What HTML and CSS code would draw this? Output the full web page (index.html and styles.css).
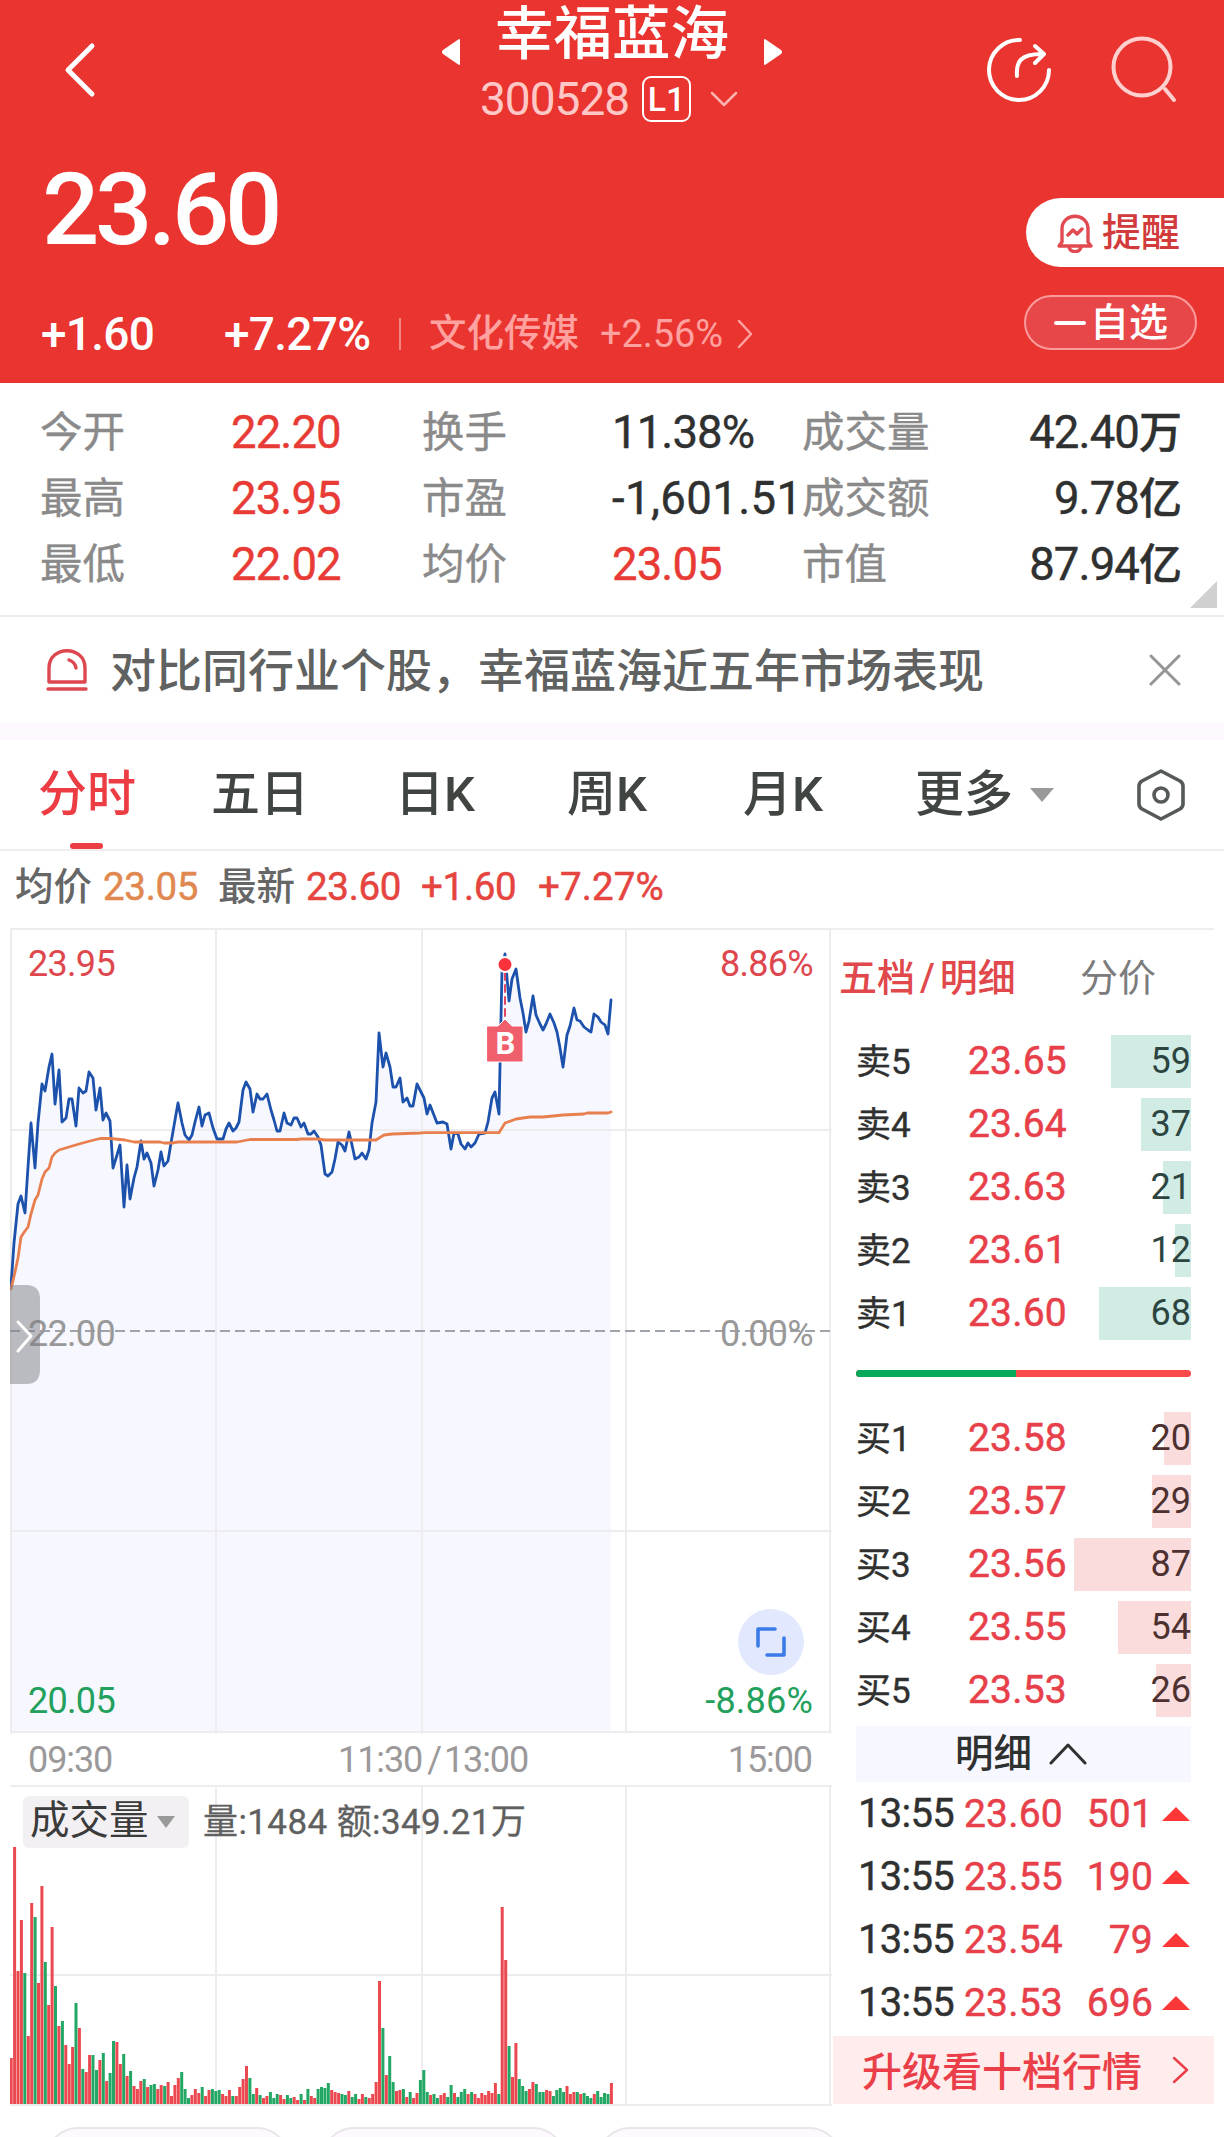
FILE: index.html
```html
<!DOCTYPE html>
<html lang="zh-CN">
<head>
  <meta charset="UTF-8">
  <title>幸福蓝海 300528</title>
  <meta name="viewport" content="width=device-width, initial-scale=1.0">
  <link rel="stylesheet" href="styles.css">
</head>
<body>
  <header class="header">
    <div class="topbar">
      <svg class="back" width="36" height="60" viewBox="0 0 36 60"><path d="M30 6 L6 30 L30 54"/></svg>
      <div class="title">
        <div class="title-row">
          <svg class="tri" width="20" height="28" viewBox="0 0 20 28"><path d="M18 1 L2 12 Q0 14 2 16 L18 27 Q19 27 19 26 V2 Q19 1 18 1Z"/></svg>
          <h1>幸福蓝海</h1>
          <svg class="tri" width="20" height="28" viewBox="0 0 20 28"><path d="M2 1 L18 12 Q20 14 18 16 L2 27 Q1 27 1 26 V2 Q1 1 2 1Z"/></svg>
        </div>
        <div class="code-row">
          <span class="code">300528</span>
          <span class="level">L1</span>
          <svg width="28" height="18" viewBox="0 0 28 18"><path d="M2 3 L14 15 L26 3"/></svg>
        </div>
      </div>
      <div class="actions">
        <svg width="70" height="70" viewBox="0 0 70 70" class="share"><path d="M36 6 A30 30 0 1 0 65 36"/><path d="M33 42 C32 28 36 20 58 20 M51 12 L60 20 L51 29"/></svg>
        <svg width="72" height="72" viewBox="0 0 72 72" class="search"><circle cx="34" cy="33" r="28.5"/><path d="M57 55 L66 66"/></svg>
      </div>
    </div>
    <div class="quote">
      <div class="quote-main">
        <div class="price">23.60</div>
        <div class="change">
          <span class="diff">+1.60</span>
          <span class="diff">+7.27%</span>
          <i class="bar"></i>
          <span class="sector">文化传媒</span>
          <span class="sector-pct">+2.56%</span>
          <svg width="18" height="30" viewBox="0 0 18 30"><path d="M3 2 L15 15 L3 28"/></svg>
        </div>
      </div>
      <div class="quote-side">
        <div class="remind">
          <svg width="38" height="40" viewBox="0 0 38 40"><path d="M6 29 V16 C6 -1 32 -1 32 16 V29 L35 33 H3 Z M13 34 C14 40 24 40 25 34 M12 22 L17 17 L21 21 L26 16"/></svg>
          <span>提醒</span>
        </div>
        <div class="favorite"><i></i><span>自选</span></div>
      </div>
    </div>
  </header>

  <section class="stats">
    <span>今开</span><b class="red">22.20</b><span>换手</span><b>11.38%</b><span>成交量</span><b class="end">42.40<em>万</em></b>
    <span>最高</span><b class="red">23.95</b><span>市盈</span><b class="wide">-1,601.51</b><span>成交额</span><b class="end">9.78<em>亿</em></b>
    <span>最低</span><b class="red">22.02</b><span>均价</span><b class="red">23.05</b><span>市值</span><b class="end">87.94<em>亿</em></b>
    <i class="corner"></i>
  </section>

  <section class="notice">
    <svg class="siren" width="42" height="44" viewBox="0 0 42 44"><path d="M3 34 V20 C3 -3 39 -3 39 20 V34 Z M2 41 H40 M23 12 Q29 14 30 20"/></svg>
    <p>对比同行业个股，幸福蓝海近五年市场表现</p>
    <svg class="close" width="32" height="32" viewBox="0 0 32 32"><path d="M2 2 L30 30 M30 2 L2 30"/></svg>
  </section>

  <nav class="tabs">
    <a class="active">分时</a>
    <a>五日</a>
    <a>日K</a>
    <a>周K</a>
    <a>月K</a>
    <a>更多</a>
    <i class="down"></i>
    <svg width="54" height="56" viewBox="0 0 54 56"><path d="M27 4 L46 14 Q49 16 49 19 V37 Q49 40 46 42 L27 52 L8 42 Q5 40 5 37 V19 Q5 16 8 14 Z"/><circle cx="27" cy="28" r="7"/></svg>
  </nav>

  <div class="summary">
    <span>均价</span><b class="orange">23.05</b><span>最新</span><b>23.60</b><b>+1.60</b><b>+7.27%</b>
  </div>

  <main class="board">
    <div class="charts">
      <svg class="trend" width="822" height="806" viewBox="0 0 822 806">
        <polygon id="area"/>
        <path class="grid" d="M1 0 V805 M206 0 V805 M412 0 V805 M616 0 V805 M820 0 V805 M0 1 H821 M0 202 H821 M0 603 H821 M0 804 H821"/>
        <path class="zero" d="M0 403 H821"/>
        <polyline id="price" points="1,358 4,315 8,276 11,268 15,285 18,239 21,195 25,240 28,195 32,156 35,163 39,139 42,126 45,176 49,142 52,194 56,190 59,171 62,171 66,198 69,160 73,165 76,163 79,144 83,150 86,182 90,160 93,192 96,185 100,193 103,240 107,227 110,217 114,279 117,237 120,271 124,250 127,239 131,213 134,231 137,225 141,235 144,258 148,242 151,224 154,238 158,233 161,215 165,192 168,175 172,195 175,207 179,212 182,207 185,194 189,179 192,198 195,187 199,185 203,200 207,211 213,211 216,201 219,195 223,203 226,200 229,194 233,162 236,154 240,161 243,184 247,166 250,171 253,171 257,166 261,182 264,192 267,203 270,203 274,185 277,195 281,197 284,190 287,190 291,199 294,195 298,206 301,206 304,203 308,209 311,217 315,246 318,248 322,244 325,231 328,214 332,217 335,223 339,204 342,217 345,231 349,229 352,225 356,231 359,222 362,195 366,174 369,105 373,139 376,125 380,139 383,159 386,159 390,150 393,174 397,170 400,178 403,178 407,156 414,170 417,186 420,177 427,195 433,194 437,196 441,221 444,205 448,206 451,216 455,221 458,215 461,219 465,215 469,206 475,205 478,194 482,170 485,164 489,186 492,42 495,26 499,73 502,51 506,41 510,70 513,85 516,104 519,93 523,68 526,87 530,96 533,102 536,96 540,86 544,95 547,104 550,120 553,139 557,107 560,98 564,80 567,92 570,93 574,99 578,102 581,104 584,86 588,89 591,94 595,97 598,106 601,72"/>
        <polyline id="average" points="1,361 5,344 8,330 11,309 15,303 18,299 21,286 25,272 28,267 32,251 35,244 39,240 42,229 45,225 49,222 59,219 69,216 80,213 90,210.5 100,210.5 115,212 124,214 150,214 154,215 162,215 168,214 227,214 240,211.5 287,211.5 291,211 307,211 315,212 366,212 374,207 382,206 410,205 415,204.7 489,204.7 495,195 506,191 520,189 533,189 553,187 574,186 577,185 598,185 601,184"/>
        <path class="mark-line" d="M495 45 V92"/>
        <circle class="mark-dot" cx="495" cy="36.5" r="7.5"/>
        <path class="mark" d="M477 98 H488 L495 91 L502 98 H513 V134 H477 Z"/>
        <text class="mark-text" x="495" y="126">B</text>
        <text class="up" x="18" y="48">23.95</text>
        <text class="up right" x="803" y="48">8.86%</text>
        <text x="18" y="418">22.00</text>
        <text class="right" x="803" y="418">0.00%</text>
        <text class="fall" x="18" y="785">20.05</text>
        <text class="fall right wide" x="803" y="785">-8.86%</text>
        <path class="handle" d="M0 357 H16 Q30 357 30 371 V442 Q30 456 16 456 H0 Z"/>
        <path class="handle-arrow" d="M8 394 L21 408 L8 423"/>
        <circle class="expand" cx="761" cy="714" r="33"/>
        <path class="expand-icon" d="M748 718 V701 H765 M774 710 V727 H757"/>
      </svg>
      <div class="times"><span>09:30</span><span>11:30<em>/</em>13:00</span><span>15:00</span></div>
      <div class="volume">
        <svg width="822" height="321" viewBox="0 0 822 321">
          <path class="grid" d="M206 0 V320 M412 0 V320 M616 0 V320 M820 0 V320 M0 1 H821 M0 190 H821 M0 320 H821"/>
          <g id="bars"></g>
        </svg>
        <div class="volume-head">
          <span class="picker"><span>成交量</span><i class="down"></i></span>
          <span class="volume-text">量:1484 额:349.21万</span>
        </div>
      </div>
    </div>

    <aside class="depth">
      <div class="depth-tabs"><span class="active">五档<em>/</em>明细</span><span>分价</span></div>
      <div class="orders" id="sell"></div>
      <div class="ratio"><i></i></div>
      <div class="orders" id="buy"></div>
      <div class="detail-title"><span>明细</span><svg width="38" height="24" viewBox="0 0 38 24"><path d="M2 21 L19 3 L36 21"/></svg></div>
      <div class="trades" id="trades"></div>
      <div class="upgrade"><span>升级看十档行情</span><svg width="18" height="30" viewBox="0 0 18 30"><path d="M2 3 L15 15 L2 27"/></svg></div>
    </aside>
  </main>

  <div class="chips"><i></i><i></i><i></i></div>

  <script>
    const sell = [["卖5", "23.65", 59], ["卖4", "23.64", 37], ["卖3", "23.63", 21], ["卖2", "23.61", 12], ["卖1", "23.60", 68]];
    const buy = [["买1", "23.58", 20], ["买2", "23.57", 29], ["买3", "23.56", 87], ["买4", "23.55", 54], ["买5", "23.53", 26]];
    const trades = [["23.60", 501], ["23.55", 190], ["23.54", 79], ["23.53", 696]];

    // one bar per minute, negative = falling minute
    const volumes = [
      46, 257, 133, 184, -131, 68, 201, -187, 121, 218, -142, 99, 177, -118, 78, -83, 59, 40, 57, -101,
      76, -35, 32, 49, -49, -34, 44, -51, 23, -31, -63, 62, 40, -50, 28, -33, 18, 15, 23, -25,
      17, -19, -20, 15, 19, -18, 22, 8, 19, 26, -32, -15, -6, 9, 15, 11, -17, 8, 14, -15,
      -13, -14, 10, 8, 14, -8, 8, 17, 25, 38, -26, -10, 16, -9, 6, 8, -12, -6, -10, 9,
      5, -9, -6, 7, 4, -10, 4, -15, 8, 6, -15, -17, -16, -21, 14, 12, 11, -10, -9, 13,
      -7, -10, 5, 10, -7, 6, 10, 22, 123, -76, 29, -48, -22, 13, 14, -15, 7, -12, 6, 11,
      -24, -34, -12, 9, -10, -6, 9, 11, -7, -19, 11, -7, -12, -15, 10, -12, 10, 6, 11, 9,
      13, 11, 21, -10, 197, 144, -58, 27, 61, -25, -18, -13, 15, 22, -20, -12, -12, 14, 13, -8,
      -14, -16, -12, 18, 10, 12, -12, 10, -11, -8, -6, 10, -13, -7, -11, -10, 21
    ];

    function showOrders(id, rows) {
      document.getElementById(id).innerHTML = rows.map(([name, price, count]) =>
        `<div class="order"><span class="name">${name}</span><span class="cost">${price}</span>` +
        `<span class="count"><i style="width: ${Math.round(count * 1.35)}px"></i><b>${count}</b></span></div>`
      ).join("");
    }

    function showVolumes() {
      document.getElementById("bars").innerHTML = volumes.map((v, i) => {
        const h = Math.abs(v);
        return `<rect class="${v > 0 ? "rise" : "drop"}" x="${(i * 3.41 - 0.3).toFixed(1)}" y="${319 - h}" width="3" height="${h}"/>`;
      }).join("");
    }

    showOrders("sell", sell);
    showOrders("buy", buy);
    showVolumes();

    document.getElementById("trades").innerHTML = trades.map(([price, count]) =>
      `<div class="trade"><span>13:55</span><span class="cost">${price}</span><span class="cost num">${count}</span><i></i></div>`
    ).join("");

    document.getElementById("area").setAttribute("points",
      "1,804 " + document.getElementById("price").getAttribute("points") + " 601,804");
  </script>
</body>
</html>
```

FILE: styles.css
```css
* {
  box-sizing: border-box;
}

body {
  margin: 0;
  width: 1224px;
  height: 2137px;
  overflow: hidden;
  background: #fff;
  color: #2f3030;
  font-family: Roboto, "Noto Sans CJK SC", sans-serif;
}

svg {
  display: block;
  flex: none;
  fill: none;
  stroke-linecap: round;
  stroke-linejoin: round;
}

em, i {
  font-style: normal;
}

b {
  font-weight: 500;
}

.header {
  height: 383px;
  background: #e93430;
  color: #fff;
}

.topbar {
  display: grid;
  grid-template-columns: 441px 342px 1fr;
  height: 130px;
}

.back {
  margin: 40px 0 0 62px;
  stroke: #fff;
  stroke-width: 5;
}

.title-row {
  display: flex;
  justify-content: space-between;
  height: 66px;
}

.title-row h1 {
  margin: 0;
  font-size: 58.5px;
  font-weight: 500;
  line-height: 69px;
}

.tri {
  margin-top: 38px;
  fill: #fff;
}

.code-row {
  display: flex;
  align-items: center;
  height: 46px;
  margin-top: 10px;
  padding-left: 39px;
}

.code {
  width: 162px;
  color: #ffc8c6;
  font-size: 46px;
  letter-spacing: -1px;
}

.level {
  width: 49px;
  height: 46px;
  margin-right: 19px;
  border: 2px solid #fff;
  border-radius: 9px;
  font-size: 34px;
  font-weight: 500;
  line-height: 42px;
  text-align: center;
}

.code-row svg {
  stroke: #ffb3b0;
  stroke-width: 2.5;
}

.actions {
  display: flex;
  padding: 34px 0 0 201px;
  gap: 54px;
}

.share {
  stroke: #fff;
  stroke-width: 4;
}

.search {
  stroke: #ffd0ce;
  stroke-width: 4;
}

.quote {
  display: flex;
  justify-content: space-between;
}

.price {
  height: 104px;
  margin: 28px 0 0 42px;
  font-size: 101px;
  font-weight: 500;
  line-height: 103px;
  letter-spacing: -4.3px;
}

.change {
  display: grid;
  grid-template-columns: 183px 175px 30px 171px 136px auto;
  align-items: center;
  height: 50px;
  margin-top: 47px;
  padding-left: 41px;
}

.diff {
  font-size: 46px;
  font-weight: 500;
  line-height: 46px;
  letter-spacing: -0.7px;
}

.bar {
  width: 2px;
  height: 32px;
  background: #f08583;
}

.sector {
  color: #ffa19f;
  font-size: 37.5px;
  font-weight: 500;
  line-height: 46px;
  padding-bottom: 2px;
}

.sector-pct {
  color: #ffa19f;
  font-size: 38px;
  line-height: 46px;
  letter-spacing: -0.1px;
}

.change svg {
  stroke: #ffa19f;
  stroke-width: 2.5;
}

.quote-side {
  width: 200px;
  padding-top: 68px;
}

.remind {
  display: flex;
  align-items: center;
  height: 69px;
  margin-left: 2px;
  padding-left: 30px;
  gap: 8px;
  border-radius: 35px 0 0 35px;
  background: #fff;
  color: #d23b3b;
  font-size: 39px;
  font-weight: 500;
}

.remind span {
  line-height: 60px;
}

.remind svg {
  stroke: #e04a50;
  stroke-width: 3.4;
}

.favorite {
  display: flex;
  align-items: center;
  width: 173px;
  height: 55px;
  margin-top: 28px;
  padding-left: 28px;
  gap: 4px;
  border: 2px solid #fb9b9b;
  border-radius: 28px;
  background: #e8474a;
  font-size: 39px;
  font-weight: 500;
}

.favorite i {
  width: 32px;
  height: 4px;
  border-radius: 2px;
  background: #fff;
}

.favorite span {
  line-height: 50px;
}

.stats {
  display: grid;
  position: relative;
  grid-template-columns: 191px 191px 190px 190px 126px 254px;
  grid-auto-rows: 66px;
  align-items: center;
  height: 234px;
  padding: 17px 0 0 40px;
  border-bottom: 2px solid #ececec;
}

.stats span {
  color: #8b8a8b;
  font-size: 42.5px;
  line-height: 60px;
  white-space: nowrap;
  -webkit-text-stroke: 0.4px;
}

.stats b {
  font-size: 45.5px;
  font-weight: 400;
  line-height: 60px;
  letter-spacing: -0.9px;
  white-space: nowrap;
  -webkit-text-stroke: 0.4px;
}

.stats .wide {
  letter-spacing: 0.4px;
}

.stats em {
  font-size: 43px;
  font-weight: 500;
  letter-spacing: 0;
}

.stats .end {
  text-align: right;
}

.stats .red {
  color: #e83b35;
}

.corner {
  position: absolute;
  right: 7px;
  bottom: 7px;
  border-bottom: 27px solid #d0d0d0;
  border-left: 27px solid transparent;
}

.notice {
  display: flex;
  align-items: center;
  height: 123px;
  padding: 0 43px 0 46px;
  border-bottom: 17px solid #fcf8fd;
}

.notice p {
  flex: 1;
  margin: 0 0 0 22px;
  padding-bottom: 6px;
  color: #5f6260;
  font-size: 46px;
  font-weight: 500;
}

.siren {
  stroke: #dd4850;
  stroke-width: 3.4;
}

.close {
  stroke: #969495;
  stroke-width: 3;
}

.tabs {
  display: grid;
  grid-template-columns: 173px 184px 172px 176px 172px 115px 104px auto;
  align-items: center;
  height: 111px;
  padding: 0 0 2px 38px;
  border-bottom: 2px solid #eee;
  color: #414541;
  font-size: 49px;
  font-weight: 500;
}

.tabs a {
  line-height: 109px;
}

.tabs .active {
  position: relative;
  color: #ec3d45;
}

.tabs .active::after {
  content: "";
  position: absolute;
  left: 32px;
  bottom: 0;
  width: 33px;
  height: 6px;
  border-radius: 3px;
  background: #ec3d45;
}

.tabs svg {
  stroke: #555957;
  stroke-width: 3.6;
}

.down {
  width: 0;
  border-top: 14px solid #999;
  border-right: 12px solid transparent;
  border-left: 12px solid transparent;
}

.summary {
  display: grid;
  grid-template-columns: 88px 115px 88px 115px 117px auto;
  align-items: center;
  height: 70px;
  padding-left: 15px;
  color: #666;
  font-size: 38.5px;
}

.summary span {
  padding-bottom: 6px;
  font-weight: 500;
}

.summary b {
  color: #e5443f;
  font-size: 38.5px;
  font-weight: 400;
  letter-spacing: -0.3px;
  -webkit-text-stroke: 0.5px;
}

.summary b:last-child {
  letter-spacing: 0.1px;
}

.summary .orange {
  color: #e08850;
}

.board {
  display: flex;
  height: 1178px;
  margin: 7px 10px 0;
}

.charts {
  width: 822px;
}

.grid {
  stroke: #ededf0;
  stroke-width: 2;
}

.zero {
  stroke: #9fa3ab;
  stroke-width: 2;
  stroke-dasharray: 10 5;
  stroke-linecap: butt;
}

#area {
  fill: #f6f7ff;
}

#price {
  stroke: #1c51ac;
  stroke-width: 2.8;
}

#average {
  stroke: #e87f4f;
  stroke-width: 2.8;
}

.trend text {
  fill: #999;
  font-size: 36px;
  letter-spacing: -0.7px;
}

.trend .right {
  text-anchor: end;
}

.trend .wide {
  letter-spacing: 0.2px;
}

.trend .up {
  fill: #de474d;
}

.trend .fall {
  fill: #22a05c;
}

.mark-line {
  stroke: #e04562;
  stroke-width: 2;
  stroke-dasharray: 7 5;
}

.mark-dot {
  fill: #fb323b;
  stroke: #fff;
  stroke-width: 2;
}

.mark {
  fill: #f0606c;
  stroke: #fff;
  stroke-width: 1;
}

.trend .mark-text {
  fill: #fff;
  font-size: 31px;
  font-weight: 700;
  text-anchor: middle;
}

.handle {
  fill: rgba(125, 125, 132, 0.5);
}

.handle-arrow {
  stroke: #fff;
  stroke-width: 3;
}

.expand {
  fill: #e2e8fd;
}

.expand-icon {
  stroke: #3b7be8;
  stroke-width: 3.6;
}

.times {
  display: grid;
  grid-template-columns: 310px 1fr auto;
  align-items: center;
  height: 51px;
  padding: 0 20px 0 18px;
  color: #9b999a;
  font-size: 36px;
  letter-spacing: -1.1px;
}

.times em {
  margin: 0 3px 0 5px;
}

.volume {
  position: relative;
}

.rise {
  fill: #ec4850;
}

.drop {
  fill: #22a764;
}

.volume-head {
  position: absolute;
  top: 8px;
  left: 13px;
  display: flex;
  align-items: center;
  gap: 14px;
}

.picker {
  display: flex;
  align-items: center;
  width: 166px;
  height: 52px;
  padding-left: 7px;
  gap: 8px;
  border-radius: 6px;
  background: #f3f0f3;
  color: #3b3b3b;
  font-size: 39.5px;
}

.picker span {
  line-height: 48px;
  padding-bottom: 2px;
}

.picker .down {
  border-width: 12px 9px 0;
}

.volume-text {
  padding-bottom: 7px;
  color: #5f6060;
  font-size: 35px;
  letter-spacing: 0.4px;
  -webkit-text-stroke: 0.3px;
}

.depth {
  width: 382px;
  border-top: 2px solid #eee;
}

.depth-tabs {
  display: flex;
  justify-content: space-between;
  height: 103px;
  padding: 0 58px 15px 7px;
  align-items: center;
  color: #7d7c7d;
  font-size: 38px;
}

.depth-tabs .active {
  color: #e0484b;
  font-weight: 500;
}

.depth-tabs em {
  margin: 0 5px;
}

.orders {
  display: grid;
  grid-auto-rows: 53px;
  gap: 10px;
  padding: 0 23px 0 24px;
}

.order {
  display: grid;
  grid-template-columns: 112px 105px 1fr;
  align-items: center;
}

.name {
  padding-bottom: 6px;
  font-size: 35px;
  -webkit-text-stroke: 0.4px;
}

.cost {
  padding-bottom: 1px;
  color: #e7404a;
  font-size: 39px;
  letter-spacing: 0.2px;
  -webkit-text-stroke: 0.5px;
}

.count {
  position: relative;
  height: 53px;
  line-height: 53px;
  text-align: right;
}

.count i {
  position: absolute;
  top: 0;
  right: 0;
  height: 53px;
  background: #d1ebe5;
}

.count b {
  position: relative;
  font-size: 36px;
  font-weight: 400;
  color: #2c4540;
}

#buy .count i {
  background: #fbdcdd;
}

#buy .count b {
  color: #4c3130;
}

.ratio {
  height: 7px;
  margin: 32px 23px 33px 24px;
  border-radius: 4px;
  background: #fb4a4c;
}

.ratio i {
  display: block;
  width: 160px;
  height: 7px;
  border-radius: 4px 0 0 4px;
  background: #07a95a;
}

.detail-title {
  display: flex;
  align-items: center;
  height: 56px;
  margin: 11px 23px 0 24px;
  padding-left: 99px;
  gap: 17px;
  background: #f6f7ff;
  font-size: 38.5px;
  font-weight: 500;
}

.detail-title span {
  line-height: 54px;
}

.detail-title svg {
  stroke: #2f3030;
  stroke-width: 3;
}

.trades {
  height: 254px;
}

.trade {
  display: grid;
  grid-template-columns: 106px 90px 1fr 28px;
  align-items: center;
  height: 63px;
  padding: 0 24px 0 26px;
  font-size: 40px;
  letter-spacing: -0.7px;
  -webkit-text-stroke: 0.4px;
}

.trade .cost {
  padding-bottom: 0;
}

.trade .num {
  padding-right: 9px;
  text-align: right;
}

.trade i {
  border-right: 14px solid transparent;
  border-bottom: 14px solid #fb3737;
  border-left: 14px solid transparent;
}

.upgrade {
  display: flex;
  justify-content: space-between;
  align-items: center;
  height: 68px;
  margin-left: 1px;
  padding: 0 24px 0 29px;
  background: #ffecec;
  color: #ea3f49;
  font-size: 40px;
  font-weight: 500;
}

.upgrade span {
  padding-bottom: 3px;
}

.upgrade svg {
  stroke: #ea3f49;
  stroke-width: 2.4;
}

.chips {
  display: flex;
  gap: 31px;
  padding: 21px 0 0 45px;
}

.chips i {
  width: 245px;
  height: 66px;
  border: 2px solid #e9e6ea;
  border-radius: 33px;
  background: #fdf9fe;
}
```
